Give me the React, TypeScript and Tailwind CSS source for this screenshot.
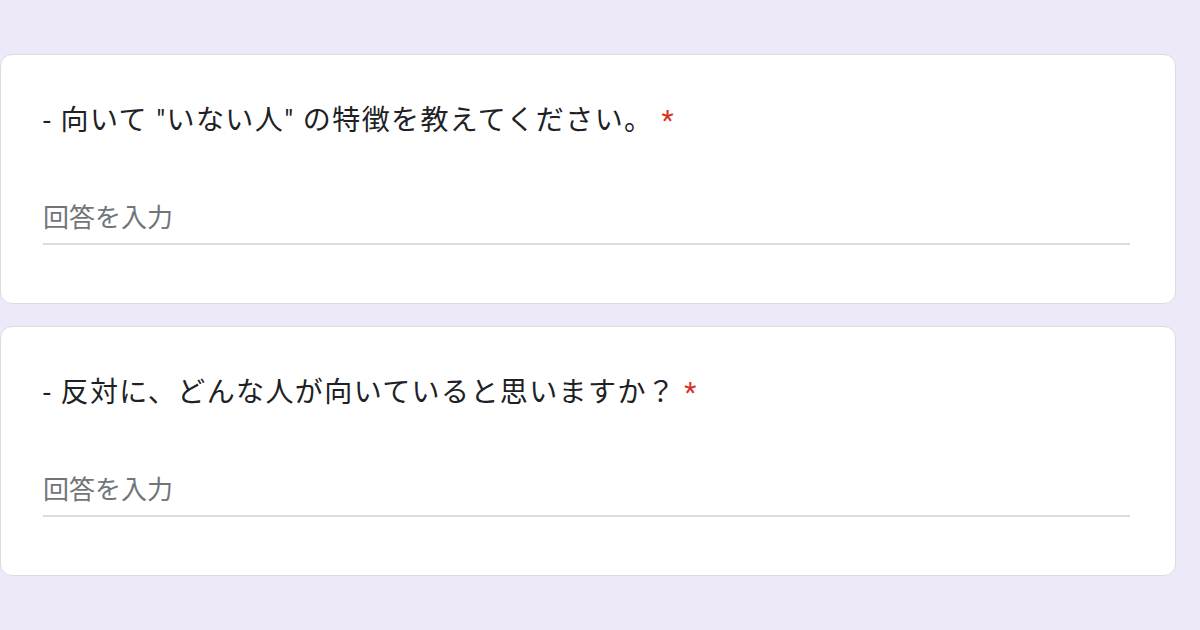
const questions = [
  { id: 'q1', title: '- 向いて "いない人" の特徴を教えてください。' },
  { id: 'q2', title: '- 反対に、どんな人が向いていると思いますか？' },
];

function QuestionCard({ title }: { title: string }) {
  return (
    <div className="bg-white border border-[#dadce0] rounded-[12px] pt-[48px] pb-[58px] pl-[42px] pr-[45px]">
      <div className="text-[28px] leading-[36px] text-[#202124] tracking-[1.4px] whitespace-pre">
        {title}
        <span className="text-[#d93025] ml-[8px]">*</span>
      </div>
      <div className="mt-[63px] border-b-2 border-[#dadce0] pb-[9px]">
        <span className="block text-[26px] leading-[32px] text-[#70757a]">回答を入力</span>
      </div>
    </div>
  );
}

export default function App() {
  return (
    <div
      className="w-[1200px] h-[630px] overflow-hidden bg-[#ede9f8] pt-[54px]"
      style={{ fontFamily: 'Roboto, "Noto Sans CJK JP", sans-serif' }}
    >
      <div className="w-[1176px] flex flex-col gap-[22px]">
        {questions.map((q) => (
          <QuestionCard key={q.id} title={q.title} />
        ))}
      </div>
    </div>
  );
}
